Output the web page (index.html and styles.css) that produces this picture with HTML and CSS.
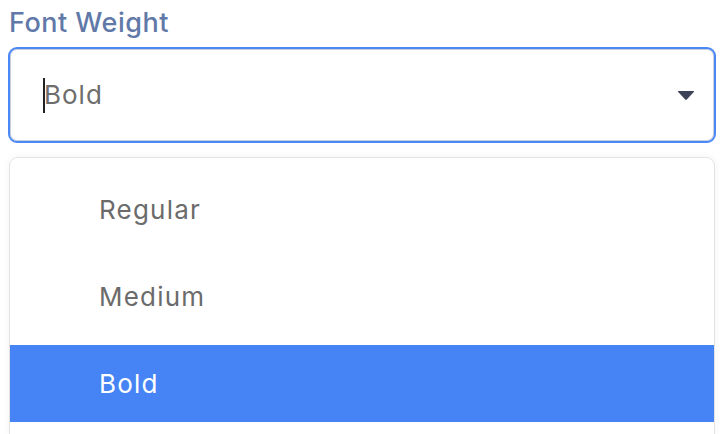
FILE: index.html
```html
<!DOCTYPE html>
<html>
<head>
<meta charset="utf-8">
<link rel="stylesheet" href="styles.css">
</head>
<body>
<div class="field">
  <label class="label">Font Weight</label>
  <div class="select">
    <span class="caret"></span><span class="value">Bold</span>
    <svg class="arrow" width="18" height="11" viewBox="0 0 18 11"><path d="M1.5 1 H16.5 Q17.6 1 16.8 1.9 L9.8 9.6 Q9 10.4 8.2 9.6 L1.2 1.9 Q0.4 1 1.5 1 Z" fill="#3d4458"/></svg>
  </div>
  <ul class="menu">
    <li class="option">Regular</li>
    <li class="option">Medium</li>
    <li class="option selected">Bold</li>
  </ul>
</div>
</body>
</html>
```
FILE: styles.css
```css
html, body {
  margin: 0;
  padding: 0;
  background: #ffffff;
}
body {
  font-family: Inter, "Noto Sans", "Liberation Sans", sans-serif;
  padding: 6px 12px 0 8px;
  overflow: hidden;
  height: 434px;
  box-sizing: border-box;
}
.field {
  display: flex;
  flex-direction: column;
  width: 708px;
}
.label {
  display: block;
  font-size: 27px;
  line-height: 34px;
  font-weight: 500;
  letter-spacing: 0.5px;
  color: #6179a8;
  padding-left: 1px;
  margin-bottom: 7px;
}
.select {
  height: 96px;
  box-sizing: border-box;
  border: 2px solid #4b88f5;
  border-radius: 9px;
  box-shadow: inset 0 0 0 1px #c9cede;
  display: flex;
  align-items: center;
  padding: 0 19px 0 33px;
  background: #fff;
}
.caret {
  width: 2px;
  height: 35px;
  background: #222;
  margin-right: -1px;
}
.value {
  flex: 1;
  font-size: 26px;
  letter-spacing: 1px;
  color: #6d6d6d;
  line-height: 34px;
}
.arrow {
  display: block;
}
.menu {
  list-style: none;
  margin: 14px 0 0 1px;
  padding: 13px 0 12px;
  width: 706px;
  box-sizing: border-box;
  border: 1px solid #e3e3e3;
  border-bottom: 0;
  border-radius: 9px 9px 0 0;
  box-shadow: 0 0 8px rgba(0,0,0,0.05);
  display: flex;
  flex-direction: column;
  gap: 10px;
  background: #fff;
}
.option {
  height: 77px;
  display: flex;
  align-items: center;
  padding-left: 89px;
  font-size: 26px;
  letter-spacing: 1.2px;
  color: #6b6b6b;
}
.option.selected {
  background: #4684f5;
  color: #ffffff;
}
```
